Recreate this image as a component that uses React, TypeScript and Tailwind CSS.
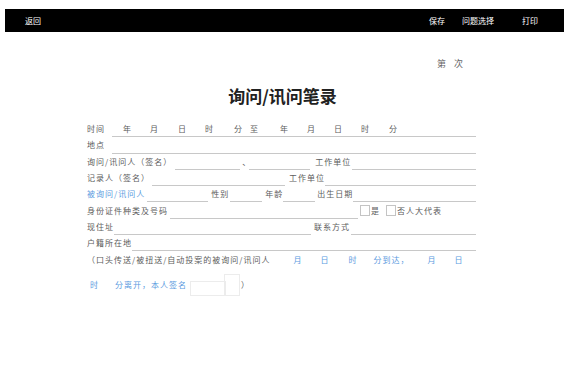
import React from 'react'

// Blank line that fills the remaining width (or a fixed width)
function Blank({ className = '' }: { className?: string }) {
  return <span className={`self-stretch border-b border-[#c8c8c8] ${className}`} />
}

function Row({ children, className = '' }: { children: React.ReactNode; className?: string }) {
  return <div className={`flex items-center h-[16.3px] ${className}`}>{children}</div>
}

function Box() {
  return <span className="inline-block w-[10px] h-[11px] border border-[#c4c4c4] mr-[1px]" />
}

export default function App() {
  return (
    <div className="w-[569px] h-[371px] bg-white font-['Noto_Sans_CJK_SC',sans-serif] text-[#5c5c5c]">
      {/* Top bar */}
      <div className="pt-[9px] px-[5px]">
        <div className="h-[23px] bg-black flex items-center text-white text-[8px] leading-none pl-[20px] pr-[26px]">
          <span>返回</span>
          <span className="ml-auto">保存</span>
          <span className="ml-[17px]">问题选择</span>
          <span className="ml-[28px]">打印</span>
        </div>
      </div>

      <div className="mt-[26px] pl-[437px] text-[9px] leading-[12px] text-[#666]">
        第<span className="ml-[8px]">次</span>
      </div>

      <h1 className="mt-[14px] h-[24px] leading-[24px] text-center text-[17px] font-bold text-[#222] pr-[4px]">
        询问/讯问笔录
      </h1>

      {/* Form */}
      <div className="mt-[13px] ml-[87px] w-[389px] text-[8px] leading-none tracking-[1px]">
        <Row>
          <span>时间</span>
          <span className="ml-[7px] flex-1 self-stretch flex items-center border-b border-[#c8c8c8]">
            <span className="ml-[11px]">年</span>
            <span className="ml-[18px]">月</span>
            <span className="ml-[19px]">日</span>
            <span className="ml-[18px]">时</span>
            <span className="ml-[20px]">分</span>
            <span className="ml-[7px]">至</span>
            <span className="ml-[21px]">年</span>
            <span className="ml-[18px]">月</span>
            <span className="ml-[18px]">日</span>
            <span className="ml-[18px]">时</span>
            <span className="ml-[19px]">分</span>
          </span>
        </Row>
        <Row>
          <span>地点</span>
          <Blank className="ml-[7px] flex-1" />
        </Row>
        <Row>
          <span>询问/讯问人（签名）</span>
          <Blank className="ml-[3px] w-[65px]" />
          <span className="ml-[2px] w-[7px]">、</span>
          <Blank className="w-[61px]" />
          <span className="ml-[5px]">工作单位</span>
          <Blank className="ml-[1px] flex-1" />
        </Row>
        <Row>
          <span>记录人（签名）</span>
          <Blank className="ml-[2px] w-[133px]" />
          <span className="ml-[4px]">工作单位</span>
          <Blank className="flex-1" />
        </Row>
        <Row>
          <span className="text-[#5b9be0]">被询问/讯问人</span>
          <Blank className="ml-[2px] w-[61px]" />
          <span className="ml-[3px]">性别</span>
          <Blank className="ml-[1px] w-[32px]" />
          <span className="ml-[3px]">年龄</span>
          <Blank className="w-[32px]" />
          <span className="ml-[2px]">出生日期</span>
          <Blank className="flex-1" />
        </Row>
        <Row>
          <span>身份证件种类及号码</span>
          <Blank className="ml-[2px] w-[188px]" />
          <span className="ml-[2px] flex items-center">
            <Box />
            是
          </span>
          <span className="ml-[6px] flex items-center">
            <Box />
            否人大代表
          </span>
        </Row>
        <Row>
          <span>现住址</span>
          <Blank className="w-[197px]" />
          <span className="ml-[3px]">联系方式</span>
          <Blank className="ml-[1px] flex-1" />
        </Row>
        <Row>
          <span>户籍所在地</span>
          <Blank className="flex-1" />
        </Row>
        <Row>
          <span>（口头传送/被扭送/自动投案的被询问/讯问人</span>
          <span className="text-[#5b9be0] ml-[23px]">月</span>
          <span className="text-[#5b9be0] ml-[18px]">日</span>
          <span className="text-[#5b9be0] ml-[19px]">时</span>
          <span className="text-[#5b9be0] ml-[16px]">分到达，</span>
          <span className="text-[#5b9be0] ml-[18px]">月</span>
          <span className="text-[#5b9be0] ml-[18px]">日</span>
        </Row>
        <div className="mt-[6px] flex items-center h-[22px]">
          <span className="text-[#5b9be0] ml-[3px]">时</span>
          <span className="text-[#5b9be0] ml-[16px]">分离开，本人签名</span>
          <span className="ml-[3px] flex items-end h-[22px]">
            <span className="w-[36px] h-[15px] border border-[#ececec]" />
            <span className="-ml-[2px] w-[16px] h-[22px] border border-[#ececec]" />
          </span>
          <span className="ml-[1px]">）</span>
        </div>
      </div>
    </div>
  )
}
